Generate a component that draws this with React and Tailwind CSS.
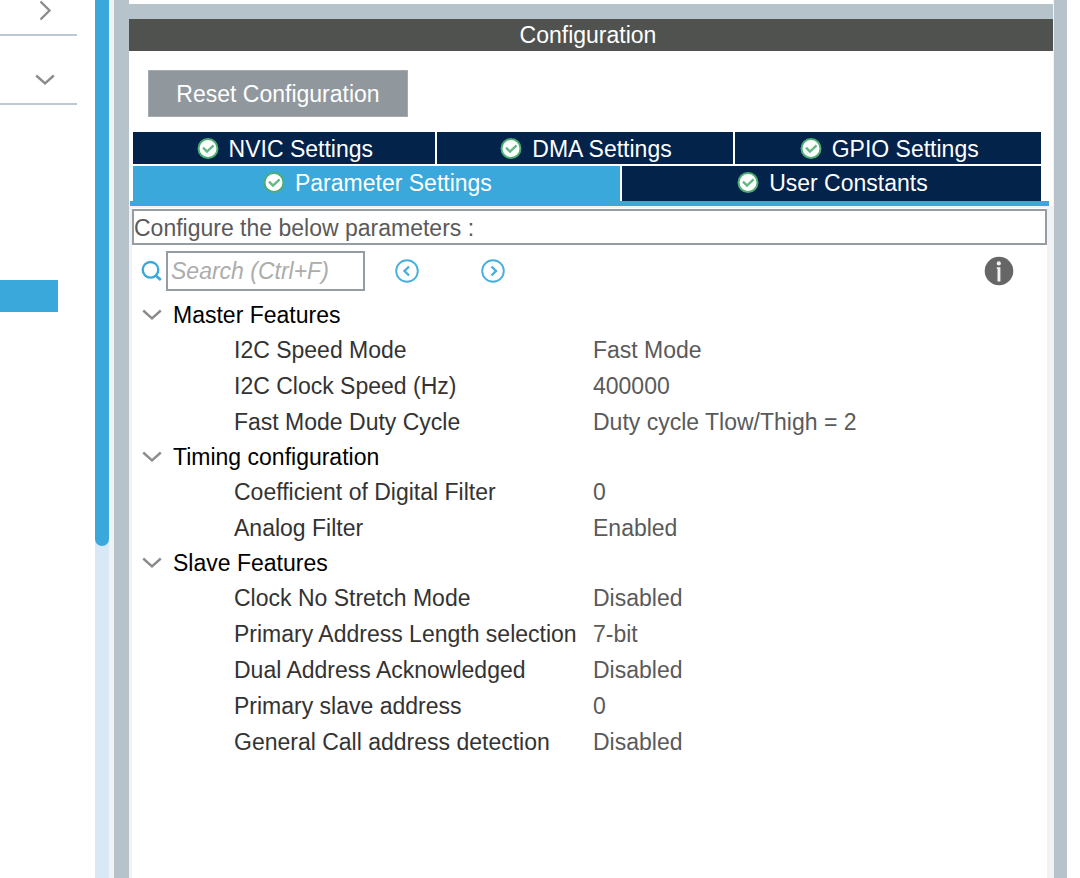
import { useState } from "react";

const groups = [
  {
    name: "Master Features",
    rows: [
      ["I2C Speed Mode", "Fast Mode"],
      ["I2C Clock Speed (Hz)", "400000"],
      ["Fast Mode Duty Cycle", "Duty cycle Tlow/Thigh = 2"],
    ],
  },
  {
    name: "Timing configuration",
    rows: [
      ["Coefficient of Digital Filter", "0"],
      ["Analog Filter", "Enabled"],
    ],
  },
  {
    name: "Slave Features",
    rows: [
      ["Clock No Stretch Mode", "Disabled"],
      ["Primary Address Length selection", "7-bit"],
      ["Dual Address Acknowledged", "Disabled"],
      ["Primary slave address", "0"],
      ["General Call address detection", "Disabled"],
    ],
  },
];

function Chevron({ className }) {
  return (
    <svg className={className} width="20" height="12" viewBox="0 0 20 12" fill="none" stroke="#8c8c8c" strokeWidth="2.4" aria-hidden="true">
      <path d="M1.2 1.5 10 9.5 18.8 1.5" />
    </svg>
  );
}

function CheckBadge() {
  return (
    <svg className="shrink-0" width="22" height="22" viewBox="0 0 22 22" aria-hidden="true">
      <circle cx="11" cy="10.5" r="9.5" fill="#fff" stroke="#4cae73" strokeWidth="2" />
      <path d="M6 9.6 10 13.6 16.6 7.4" fill="none" stroke="#62b986" strokeWidth="2.4" />
    </svg>
  );
}

function Tab({ label, className, active, onClick }) {
  return (
    <button
      type="button"
      role="tab"
      aria-selected={active}
      onClick={onClick}
      className={`flex items-center justify-center gap-[10px] whitespace-nowrap pl-[2px] text-white ${active ? "bg-[#3aa8db]" : "bg-[#03234b]"} ${className}`}
    >
      <CheckBadge />
      {label}
    </button>
  );
}

function CircleArrow({ path, label }) {
  return (
    <button type="button" aria-label={label}>
      <svg width="26" height="26" viewBox="0 0 26 26" fill="none" stroke="#48afde" strokeWidth="1.9" aria-hidden="true">
        <circle cx="13" cy="13" r="10.8" />
        <path d={path} strokeWidth="2.4" />
      </svg>
    </button>
  );
}

function Sidebar() {
  return (
    <aside className="flex w-[95px] shrink-0 flex-col bg-white">
      <button type="button" aria-label="Expand category" className="mr-[18px] flex h-9 items-start justify-end border-b-2 border-[#bcc9d4] pr-[22px]">
        <svg width="20" height="21" viewBox="0 0 20 21" fill="none" stroke="#8c8c8c" strokeWidth="2.4" aria-hidden="true">
          <path d="M5.5 1.5 14.5 10.5 5.5 19.5" />
        </svg>
      </button>
      <button type="button" aria-label="Collapse category" className="mr-[18px] flex h-[69px] items-center justify-end border-b-2 border-[#bcc9d4] pt-5 pr-[22px]">
        <Chevron />
      </button>
      <button type="button" aria-label="Selected peripheral" className="mt-[175px] mr-[37px] h-8 bg-[#3aa8db]" />
    </aside>
  );
}

export default function App() {
  const [tab, setTab] = useState("Parameter Settings");
  const [closed, setClosed] = useState({});
  const tabProps = (label) => ({ label, active: tab === label, onClick: () => setTab(label) });

  return (
    <div className="flex min-h-screen bg-white font-['Liberation_Sans',Arial,sans-serif] text-[23px] leading-7 text-[#333]">
      <Sidebar />
      <div className="w-[14px] shrink-0 bg-[#d9e8f5]">
        <div className="h-[546px] rounded-b-full bg-[#3aa8db]" />
      </div>
      <div className="w-[5px] shrink-0 bg-[#f0f2f3]" />
      <div className="w-[15px] shrink-0 bg-[#b7c3ca]" />

      <main className="flex min-w-0 flex-1 flex-col">
        <div className="mt-1 h-[15px] bg-[#b7c3ca]" />
        <h1 className="flex h-8 items-center justify-center bg-[#50524f] pr-[6px] text-white">Configuration</h1>
        <button type="button" className="mt-[19px] ml-[19px] h-[47px] w-[260px] self-start border border-[#a4aaae] bg-[#90989e] text-white">
          Reset Configuration
        </button>

        <div role="tablist" className="mt-[15px] mr-3 ml-1 flex flex-col gap-[2px]">
          <div className="flex gap-[2px]">
            <Tab {...tabProps("NVIC Settings")} className="h-8 basis-0 grow-[302] pt-[2px]" />
            <Tab {...tabProps("DMA Settings")} className="h-8 basis-0 grow-[297] pt-[2px]" />
            <Tab {...tabProps("GPIO Settings")} className="h-8 basis-0 grow-[306] pt-[2px]" />
          </div>
          <div className="flex gap-[2px]">
            <Tab {...tabProps("Parameter Settings")} className="h-[35px] basis-0 grow-[487] pb-[2px]" />
            <Tab {...tabProps("User Constants")} className="h-[35px] basis-0 grow-[419] pb-[2px]" />
          </div>
        </div>
        <div className="mr-1 ml-px h-[5px] bg-[#3aa8db]" />

        <section className="flex-1 border-x-[3px] border-r-[6px] border-[#f0f2f3]">
          <div className="h-[2px] bg-[#f0f2f3]" />
          <p className="mt-px flex h-9 items-center border-2 border-[#969da2] pt-px text-[#5a5a5a]">
            Configure the below parameters :
          </p>
          <div className="mt-[6px] flex h-10 items-center pr-[33px]">
            <label htmlFor="search" aria-label="Search parameters" className="mr-1 ml-[9px]">
              <svg width="21" height="22" viewBox="0 0 21 22" fill="none" stroke="#3aa8db" aria-hidden="true">
                <circle cx="9.5" cy="9.8" r="7.8" strokeWidth="2.3" />
                <path d="M14.5 15.2 19.8 20" strokeWidth="2.8" />
              </svg>
            </label>
            <input
              id="search"
              type="text"
              placeholder="Search (Ctrl+F)"
              className="h-10 w-[199px] border-2 border-[#969da2] pl-[3px] outline-none placeholder:text-[#acacac] placeholder:italic"
            />
            <div className="ml-[29px] flex gap-[60px]">
              <CircleArrow label="Previous match" path="M15 8.5 10.5 13 15 17.5" />
              <CircleArrow label="Next match" path="M11.5 8.5 16 13 11.5 17.5" />
            </div>
            <button type="button" aria-label="Information" className="ml-auto">
              <svg width="30" height="30" viewBox="0 0 30 30" aria-hidden="true">
                <circle cx="15" cy="15" r="14.3" fill="#666" />
                <circle cx="14.8" cy="7.4" r="2.1" fill="#f2f2f2" />
                <path d="M12.7 11.2H16.4V25.5H13.5V12.7H12.7Z" fill="#f2f2f2" />
              </svg>
            </button>
          </div>

          <table className="mt-[7px] w-full table-fixed border-collapse text-left">
            <colgroup>
              <col className="w-[461px]" />
              <col />
            </colgroup>
            {groups.map((group) => (
              <tbody key={group.name}>
                <tr>
                  <th colSpan={2} scope="rowgroup" className="h-[34px] p-0 font-normal">
                    <button
                      type="button"
                      aria-expanded={!closed[group.name]}
                      onClick={() => setClosed({ ...closed, [group.name]: !closed[group.name] })}
                      className="flex items-center gap-[11px] pl-[10px] text-black"
                    >
                      <Chevron className={closed[group.name] ? "-rotate-90" : ""} />
                      {group.name}
                    </button>
                  </th>
                </tr>
                {!closed[group.name] &&
                  group.rows.map(([name, value]) => (
                    <tr key={name}>
                      <th scope="row" className="h-9 p-0 pl-[102px] font-normal whitespace-nowrap">{name}</th>
                      <td className="h-9 p-0 text-[#5a5a5a]">{value}</td>
                    </tr>
                  ))}
              </tbody>
            ))}
          </table>
        </section>
      </main>

      <div className="w-px shrink-0 bg-[#f0f2f3]" />
      <div className="mr-[13px] w-[13px] shrink-0 bg-[#b7c3ca]" />
    </div>
  );
}
